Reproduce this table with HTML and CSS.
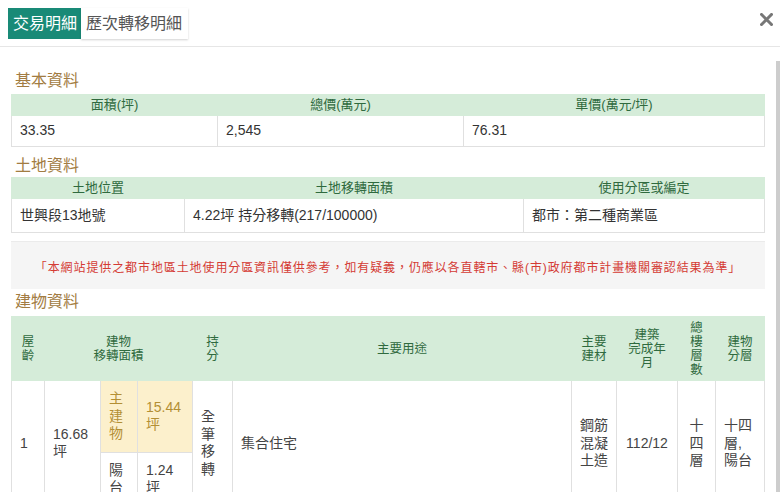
FILE: index.html
```html
<!DOCTYPE html>
<html lang="zh-Hant">
<head>
    <meta charset="UTF-8">
    <meta name="viewport" content="width=device-width, initial-scale=1.0">
    <title>交易明細</title>
    <link rel="stylesheet" href="styles.css">
</head>
<body>

    <div class="modal-header">
        <div class="tabs">
            <div class="tab active">交易明細</div>
            <div class="tab">歷次轉移明細</div>
        </div>
        <button class="close-btn" aria-label="close">
            <svg width="13" height="13" viewBox="0 0 13 13">
                <path d="M1.5 1.5 L11.5 11.5 M11.5 1.5 L1.5 11.5" stroke="#777" stroke-width="3" stroke-linecap="square"/>
            </svg>
        </button>
    </div>

    <div class="modal-body">
        <div class="content">
            <h3 class="section-title">基本資料</h3>
            <table class="info basic">
                <colgroup>
                    <col style="width: 206px">
                    <col style="width: 246px">
                    <col>
                </colgroup>
                <tr>
                    <th>面積(坪)</th>
                    <th>總價(萬元)</th>
                    <th>單價(萬元/坪)</th>
                </tr>
                <tr>
                    <td>33.35</td>
                    <td>2,545</td>
                    <td>76.31</td>
                </tr>
            </table>

            <h3 class="section-title">土地資料</h3>
            <table class="info land">
                <colgroup>
                    <col style="width: 173px">
                    <col style="width: 339px">
                    <col>
                </colgroup>
                <tr>
                    <th>土地位置</th>
                    <th>土地移轉面積</th>
                    <th>使用分區或編定</th>
                </tr>
                <tr>
                    <td>世興段13地號</td>
                    <td>4.22坪 持分移轉(217/100000)</td>
                    <td>都市：第二種商業區</td>
                </tr>
            </table>

            <div class="notice">「本網站提供之都市地區土地使用分區資訊僅供參考，如有疑義，仍應以各直轄市、縣(市)政府都市計畫機關審認結果為準」</div>

            <h3 class="section-title building-title">建物資料</h3>
            <table class="info building">
                <colgroup>
                    <col style="width: 33px">
                    <col style="width: 56px">
                    <col style="width: 37px">
                    <col style="width: 55px">
                    <col style="width: 40px">
                    <col>
                    <col style="width: 45px">
                    <col style="width: 61px">
                    <col style="width: 38px">
                    <col style="width: 49px">
                </colgroup>
                <tr>
                    <th>屋齡</th>
                    <th colspan="3">建物<br>移轉面積</th>
                    <th>持分</th>
                    <th>主要用途</th>
                    <th>主要建材</th>
                    <th>建築<br>完成年月</th>
                    <th>總樓層數</th>
                    <th>建物分層</th>
                </tr>
                <tr>
                    <td rowspan="2">1</td>
                    <td rowspan="2">16.68坪</td>
                    <td class="main-part">主建物</td>
                    <td class="main-part">15.44坪</td>
                    <td rowspan="2">全筆移轉</td>
                    <td rowspan="2">集合住宅</td>
                    <td rowspan="2">鋼筋混凝土造</td>
                    <td rowspan="2" class="center">112/12</td>
                    <td rowspan="2" class="center">十四層</td>
                    <td rowspan="2" class="floors">十四層,陽台</td>
                </tr>
                <tr>
                    <td>陽台</td>
                    <td>1.24坪</td>
                </tr>
            </table>
        </div>
        <div class="scrollbar"></div>
    </div>

</body>
</html>
```

FILE: styles.css
```css
html, body {
    margin: 0;
    height: 100%;
}

body {
    font-family: 'Liberation Sans', 'Noto Sans CJK TC', sans-serif;
    background-color: #fff;
    color: #333;
    overflow: hidden;
}

.modal-header {
    display: flex;
    justify-content: space-between;
    align-items: flex-start;
    height: 47px;
    padding: 8px 7px 0 8px;
    box-sizing: border-box;
    border-bottom: 1px solid #e6e6e6;
}

.tabs {
    display: flex;
}

.tab {
    height: 31px;
    line-height: 31px;
    padding: 0 6px 0 5px;
    font-size: 16px;
    color: #555;
    background-color: #fff;
    box-shadow: 0 1px 2px rgba(0, 0, 0, 0.18);
}

.tab.active {
    background-color: #198a77;
    color: #fff;
    padding: 0 4px 0 5px;
    box-shadow: none;
}

.close-btn {
    margin-top: 5px;
    padding: 0;
    width: 13px;
    height: 13px;
    background: none;
    border: none;
    cursor: pointer;
}

.close-btn svg {
    display: block;
}

.modal-body {
    display: flex;
}

.content {
    flex: 1;
    padding: 0 11px;
}

.scrollbar {
    width: 4px;
    margin-top: 14px;
    height: 440px;
    background-color: #cdcdcd;
}

.section-title {
    margin: 23px 0 2px 4px;
    font-size: 16px;
    line-height: 22px;
    font-weight: normal;
    color: #a27c42;
}

.basic + .section-title {
    margin-top: 8px;
    margin-bottom: 0;
}

.building-title {
    margin-top: 2px;
    margin-bottom: 3px;
}

.info {
    width: 100%;
    border-collapse: collapse;
    table-layout: fixed;
    font-size: 14px;
}

.info th {
    background-color: #d5ecd9;
    color: #2f6a3e;
    font-size: 13px;
    font-weight: normal;
    line-height: 18px;
    padding: 1px 8px;
    border: 1px solid #d5ecd9;
    text-align: center;
}

.info td {
    border: 1px solid #e0e0e0;
    padding: 6px 8px;
    line-height: 17.5px;
    text-align: left;
    vertical-align: middle;
}

.land td {
    padding: 8px 8px;
}

.building th {
    font-size: 12.5px;
    line-height: 14px;
    padding: 4px 8px 3px;
    vertical-align: middle;
}

.building td {
    padding: 9px 8px;
    color: #444;
}

.building td.center {
    text-align: center;
}

.building td.floors {
    padding-right: 10px;
}

.building td.main-part {
    background-color: #fcf0cc;
    color: #b38f34;
}

.notice {
    margin: 8px 0 0;
    padding: 18px 10px 12px;
    background-color: #f5f5f5;
    border-top: 1px solid #ebebeb;
    color: #d43b34;
    font-size: 12px;
    line-height: 17px;
    letter-spacing: 0.9px;
    text-align: center;
}
```
